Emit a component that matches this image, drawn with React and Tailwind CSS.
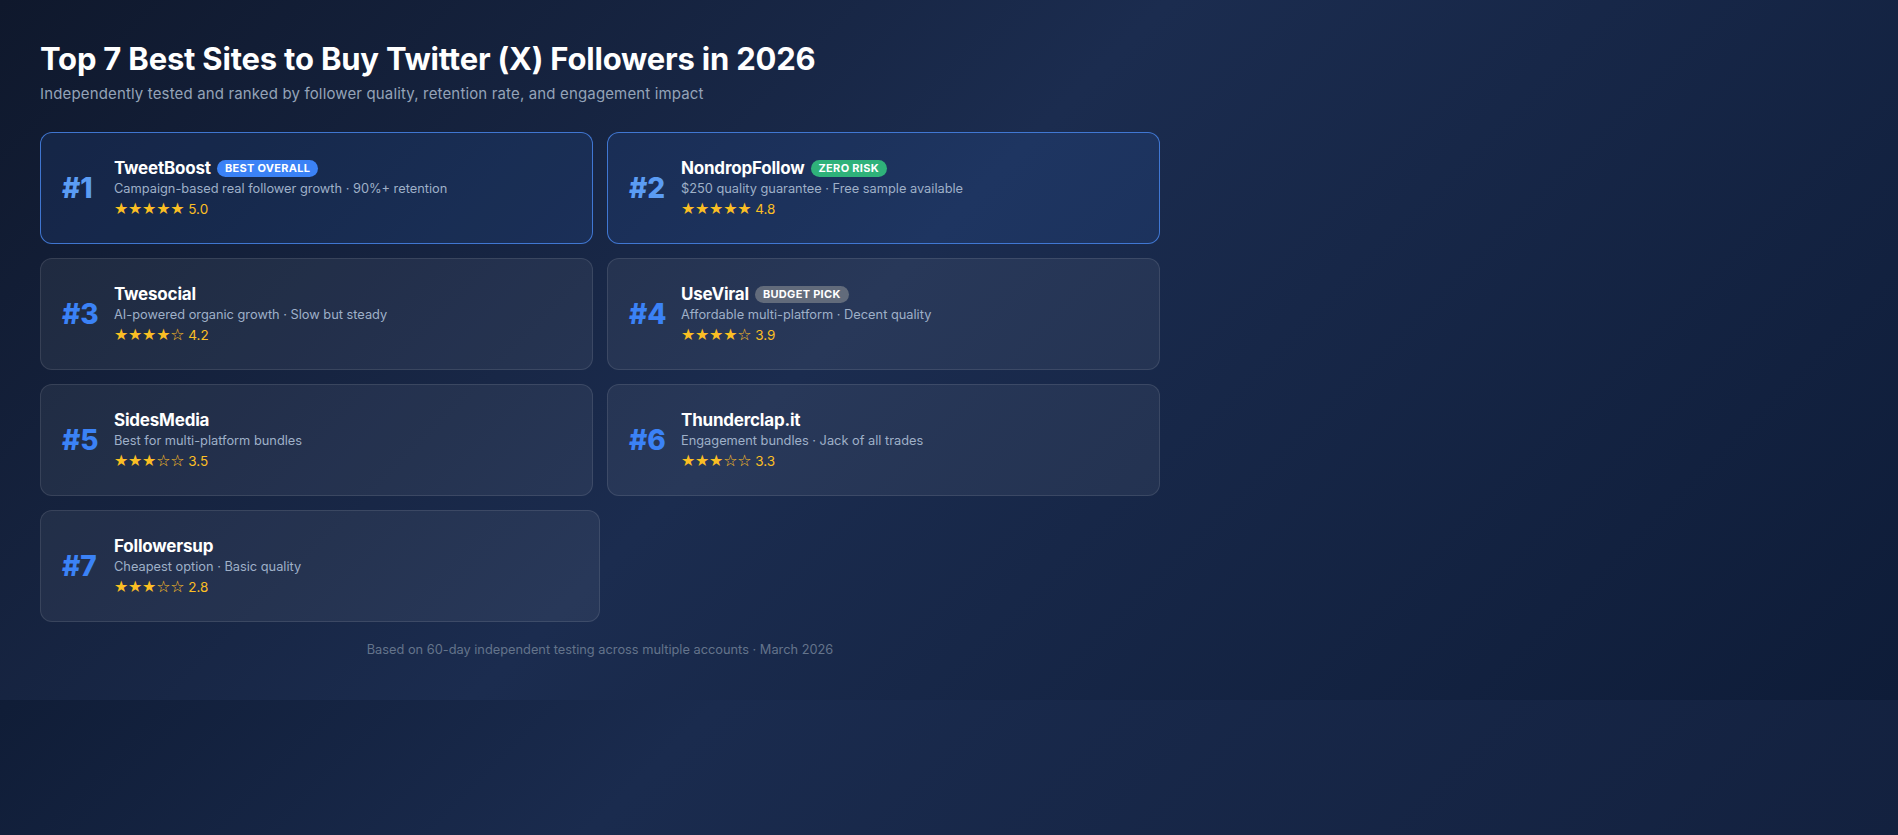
import React from 'react';

const sites = [
  { rank: 1, name: 'TweetBoost', badge: 'BEST OVERALL', tone: 'blue', desc: 'Campaign-based real follower growth · 90%+ retention', stars: 5, rating: '5.0', top: true },
  { rank: 2, name: 'NondropFollow', badge: 'ZERO RISK', tone: 'green', desc: '$250 quality guarantee · Free sample available', stars: 5, rating: '4.8', top: true },
  { rank: 3, name: 'Twesocial', desc: 'AI-powered organic growth · Slow but steady', stars: 4, rating: '4.2' },
  { rank: 4, name: 'UseViral', badge: 'BUDGET PICK', tone: 'gray', desc: 'Affordable multi-platform · Decent quality', stars: 4, rating: '3.9' },
  { rank: 5, name: 'SidesMedia', desc: 'Best for multi-platform bundles', stars: 3, rating: '3.5' },
  { rank: 6, name: 'Thunderclap.it', desc: 'Engagement bundles · Jack of all trades', stars: 3, rating: '3.3' },
  { rank: 7, name: 'Followersup', desc: 'Cheapest option · Basic quality', stars: 3, rating: '2.8' },
];

const badgeTone = {
  blue: 'bg-[#3b82f6] text-white',
  green: 'bg-[#2fb27a] text-white',
  gray: 'bg-[#626b7b] text-white',
};

function Stars({ count }) {
  return (
    <span className="font-['DejaVu_Sans',sans-serif] text-[16px] tracking-[-0.3px] text-[#fbbf24]">
      {'★'.repeat(count)}
      {'☆'.repeat(5 - count)}
    </span>
  );
}

function SiteCard({ site }) {
  return (
    <div
      className={
        'flex h-[112px] max-w-[560px] flex-[1_1_calc(50%-7px)] items-center gap-[14px] rounded-xl border px-[21px] ' +
        (site.top
          ? 'border-[rgba(72,132,232,0.85)] bg-[rgba(59,130,246,0.11)]'
          : 'border-white/10 bg-white/[0.06]')
      }
    >
      <div
        className={
          'w-[38px] text-[28px] font-extrabold leading-none ' +
          (site.top ? 'text-[#5b9cf3]' : 'text-[#3b82f6]')
        }
      >
        #{site.rank}
      </div>
      <div className="flex flex-col">
        <div className="flex items-center gap-[6px]">
          <span className="text-[17px] font-bold leading-[22px] tracking-[-0.2px] text-white">{site.name}</span>
          {site.badge && (
            <span
              className={
                'rounded-full px-[8px] text-[11px] font-bold leading-[17px] tracking-[0.3px] ' +
                badgeTone[site.tone]
              }
            >
              {site.badge}
            </span>
          )}
        </div>
        <div className="mt-[1px] text-[12.8px] leading-[18px] text-[#9fb0c8]">{site.desc}</div>
        <div className="mt-[1px] flex items-center gap-[4px] leading-[20px]">
          <Stars count={site.stars} />
          <span className="text-[13.5px] text-[#fbbf24]">{site.rating}</span>
        </div>
      </div>
    </div>
  );
}

export default function App() {
  return (
    <div className="min-h-screen bg-[linear-gradient(135deg,#060f20_0%,#1a2b4e_52%,#13213f_100%)] font-['Inter',sans-serif]">
      <section className="bg-[linear-gradient(135deg,#0f182c_0%,#1b2c4f_45%,#0e1c38_100%)]">
        <div className="max-w-[1200px] px-10 pt-10 pb-10">
          <h1 className="text-[31px] font-bold leading-[38px] tracking-[-0.2px] text-white">
            Top 7 Best Sites to Buy Twitter (X) Followers in 2026
          </h1>
          <p className="mt-[6px] text-[15px] leading-[20px] tracking-[0.15px] text-[#94a3b8]">
            Independently tested and ranked by follower quality, retention rate, and engagement impact
          </p>

          <div className="mt-[28px] flex flex-wrap gap-[14px]">
            {sites.map((site) => (
              <SiteCard key={site.rank} site={site} />
            ))}
          </div>

          <p className="mt-[18px] text-center text-[12.8px] leading-[20px] text-[#64748b]">
            Based on 60-day independent testing across multiple accounts · March 2026
          </p>
        </div>
      </section>
    </div>
  );
}
